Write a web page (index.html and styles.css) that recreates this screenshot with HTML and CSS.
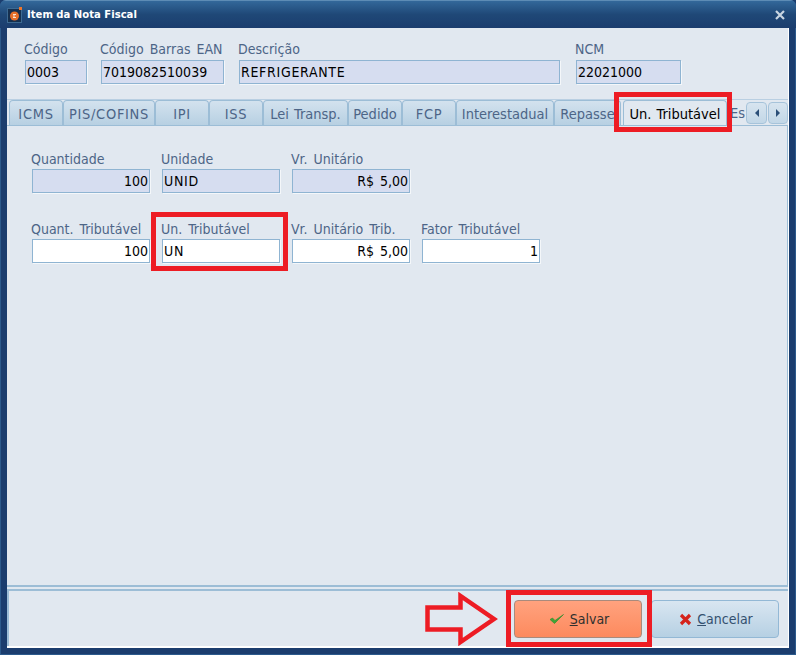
FILE: index.html
```html
<!DOCTYPE html>
<html lang="pt-BR">
  <head>
    <meta charset="utf-8" />
    <title>Item da Nota Fiscal</title>
    <link rel="stylesheet" href="styles.css">
  </head>
  <body>
    <div class="window">
      <div class="titlebar">
        <svg class="app-icon" width="16" height="16" viewBox="0 0 16 16">
          <rect x="0.5" y="1.5" width="14" height="14" fill="#16304f" stroke="#3d6a92"/>
          <circle cx="7.5" cy="9" r="4.5" fill="#e8702a"/>
          <path d="M6 7.5 h3 M8 9 h-2 M6 10.5 h3" stroke="#fbe3d0" stroke-width="1" fill="none"/>
          <rect x="12" y="0" width="3" height="3" fill="#f0762a"/>
        </svg>
        <div class="title">Item da Nota Fiscal</div>
        <svg class="close" width="10" height="10" viewBox="0 0 10 10">
          <path d="M1 1 L9 9 M9 1 L1 9" stroke="#c9d6e2" stroke-width="2.2"/>
        </svg>
      </div>

      <div class="content">
        <div class="header">
          <div class="field w62">
            <div class="label">Código</div>
            <div class="box readonly">0003</div>
          </div>
          <div class="field w123">
            <div class="label">Código Barras EAN</div>
            <div class="box readonly">7019082510039</div>
          </div>
          <div class="field w321">
            <div class="label">Descrição</div>
            <div class="box readonly caps">REFRIGERANTE</div>
          </div>
          <div class="field w105">
            <div class="label">NCM</div>
            <div class="box readonly">22021000</div>
          </div>
        </div>

        <div class="tabstrip">
          <div class="tabs">
            <div class="tab t54 caps">ICMS</div>
            <div class="tab t92 caps">PIS/COFINS</div>
            <div class="tab t54 caps">IPI</div>
            <div class="tab t54 caps">ISS</div>
            <div class="tab t85">Lei Transp.</div>
            <div class="tab t54">Pedido</div>
            <div class="tab t54 caps">FCP</div>
            <div class="tab t98">Interestadual</div>
            <div class="tab t67">Repasse</div>
            <div class="tab active">Un. Tributável</div>
            <div class="tab cut">Es</div>
          </div>
          <div class="scroll-btn"><span class="arrow-left"></span></div>
          <div class="scroll-btn"><span class="arrow-right"></span></div>
        </div>

        <div class="page">
          <div class="row">
            <div class="field w118">
              <div class="label">Quantidade</div>
              <div class="box readonly num">100</div>
            </div>
            <div class="field w118">
              <div class="label">Unidade</div>
              <div class="box readonly caps">UNID</div>
            </div>
            <div class="field w118">
              <div class="label">Vr. Unitário</div>
              <div class="box readonly num">R$ 5,00</div>
            </div>
          </div>
          <div class="row">
            <div class="field w118">
              <div class="label">Quant. Tributável</div>
              <div class="box num">100</div>
            </div>
            <div class="field w118">
              <div class="label">Un. Tributável</div>
              <div class="box caps">UN</div>
            </div>
            <div class="field w118">
              <div class="label">Vr. Unitário Trib.</div>
              <div class="box num">R$ 5,00</div>
            </div>
            <div class="field w118">
              <div class="label">Fator Tributável</div>
              <div class="box num">1</div>
            </div>
          </div>
        </div>

        <div class="footer">
          <div class="btn btn-save">
            <svg width="16" height="12" viewBox="0 0 16 12">
              <path d="M1 6.5 L5.5 10.5 L14.5 1.5 L6 7.5 L3.5 5 Z" fill="#3fa535" stroke="#2b8a2b" stroke-width="0.6"/>
            </svg>
            <span><u>S</u>alvar</span>
          </div>
          <div class="btn btn-cancel">
            <svg width="13" height="13" viewBox="0 0 13 13">
              <path d="M2 2 L11 11 M11 2 L2 11" stroke="#d5231b" stroke-width="3.2"/>
            </svg>
            <span><u>C</u>ancelar</span>
          </div>
        </div>
      </div>

      <!-- red marks drawn over the screenshot -->
      <div class="mark mark-tab"></div>
      <div class="mark mark-field"></div>
      <div class="mark mark-save"></div>
      <svg class="mark-arrow" width="74" height="54" viewBox="0 0 74 54">
        <path d="M2.5 15.5 H35.5 V4 L69 27 L35.5 50 V37.5 H2.5 Z" fill="none" stroke="#ed1c24" stroke-width="4.5"/>
      </svg>
    </div>
  </body>
</html>
```

FILE: styles.css
```css
* {
  box-sizing: border-box;
}
body {
  margin: 0;
  background-color: #1b3d6e;
  font-family: "DejaVu Sans Condensed", "DejaVu Sans", sans-serif;
  font-size: 14px;
}
.window {
  position: relative;
  width: 796px;
  height: 655px;
  padding: 0 7px 7px;
  display: flex;
  flex-direction: column;
  background-color: #1b3d6e;
  box-shadow: inset 0 0 0 1px #2c5a8c;
  border-top-left-radius: 6px;
  border-top-right-radius: 6px;
  overflow: hidden;
}
.titlebar {
  height: 28px;
  margin: 0 -7px;
  padding: 0 11px 0 7px;
  display: flex;
  align-items: center;
  background: linear-gradient(#33689a, #1f4877 50%, #1b3d6e);
  border-top: 1px solid #5d8cb5;
}
.app-icon {
  flex-shrink: 0;
}
.title {
  flex: 1;
  margin-left: 4px;
  color: white;
  font-size: 11.2px;
  font-weight: bold;
}
.content {
  flex: 1;
  display: flex;
  flex-direction: column;
  background-color: #e1e8f0;
  border: solid white;
  border-width: 0 1px 2px 0;
}
.header {
  height: 71px;
  padding: 12px 0 0 18px;
  display: flex;
}
.header .field {
  margin-right: 14px;
}
.header .w123 {
  margin-right: 15px;
}
.header .w321 {
  margin-right: 16px;
}
.field {
  display: flex;
  flex-direction: column;
}
.w62 { width: 62px; }
.w105 { width: 105px; }
.w118 { width: 118px; }
.w123 { width: 123px; }
.w321 { width: 321px; }
.label {
  height: 20px;
  margin-left: -1px;
  line-height: 18px;
  color: #4d6587;
  word-spacing: 2px;
  white-space: nowrap;
}
.page .label {
  line-height: 20px;
}
.box {
  height: 24px;
  padding: 0 1px;
  line-height: 23px;
  color: black;
  background-color: white;
  border: 1px solid #8fb4d2;
  box-shadow: 1px 1px 0 #f4f7fa;
  word-spacing: 2px;
  white-space: nowrap;
}
.readonly {
  background-color: #d6ddf0;
}
.num {
  text-align: right;
}
.caps {
  letter-spacing: 0.7px;
}
.tabstrip {
  height: 26px;
  padding-left: 2px;
  display: flex;
  border-top: 1px solid #b9cfe2;
}
.tabs {
  width: 736px;
  display: flex;
  overflow: hidden;
}
.tab {
  flex-shrink: 0;
  height: 25px;
  line-height: 26px;
  text-align: center;
  color: #4d6587;
  font-size: 14.5px;
  word-spacing: 1px;
  background: linear-gradient(#d3e2ee, #b7d0e2);
  border: 1px solid #9cbdd6;
  border-bottom: none;
  border-radius: 4px 4px 0 0;
}
.t54 { width: 54px; }
.t67 { width: 67px; }
.t85 { width: 85px; }
.t92 { width: 92px; }
.t98 { width: 98px; }
.tab.active {
  position: relative;
  width: 104px;
  height: 27px;
  margin-left: 2px;
  color: black;
  background: #e1e8f0;
  z-index: 1;
}
.tab.cut {
  width: 16px;
  margin-left: 3px;
  text-align: left;
  background: none;
  border: none;
}
.scroll-btn {
  width: 21px;
  height: 22px;
  margin: 2px 0 0 1px;
  display: flex;
  align-items: center;
  justify-content: center;
  background: linear-gradient(#d7e4ef, #c2d7e7);
  border: 1px solid #a6c3da;
  border-radius: 4px;
}
.scroll-btn + .scroll-btn {
  width: 20px;
}
.arrow-left {
  border: solid transparent;
  border-width: 4px 4px 4px 0;
  border-right-color: #2b4f78;
}
.arrow-right {
  border: solid transparent;
  border-width: 4px 0 4px 4px;
  border-left-color: #2b4f78;
}
.page {
  flex: 1;
  padding: 23px 0 0 25px;
  display: flex;
  flex-direction: column;
  gap: 26px;
  border: solid #9cbdd6;
  border-width: 1px 1px 2px 0;
}
.row {
  display: flex;
  gap: 12px;
}
.footer {
  height: 57px;
  margin-top: 2px;
  padding: 9px 9px 0 0;
  display: flex;
  justify-content: flex-end;
  gap: 9px;
  border: solid #9cbdd6;
  border-width: 2px 0 0 2px;
}
.btn {
  width: 128px;
  height: 38px;
  display: flex;
  align-items: center;
  justify-content: center;
  gap: 5px;
  color: #33506f;
  border-radius: 4px;
}
.btn-save {
  padding-left: 2px;
  color: #30302e;
  background: linear-gradient(#ffa27e, #fd8a5e);
  border: 1px solid #a98a7c;
}
.btn-cancel {
  padding-left: 2px;
  background: linear-gradient(#d9e6f1, #b6d0e3);
  border: 1px solid #93b8d5;
}
.mark {
  position: absolute;
  border: 5px solid #ed1c24;
}
.mark-tab {
  left: 614px;
  top: 92px;
  width: 118px;
  height: 40px;
  z-index: 2;
}
.mark-field {
  left: 151px;
  top: 212px;
  width: 137px;
  height: 59px;
}
.mark-save {
  left: 506px;
  top: 590px;
  width: 146px;
  height: 57px;
}
.mark-arrow {
  position: absolute;
  left: 425px;
  top: 592px;
}
```
